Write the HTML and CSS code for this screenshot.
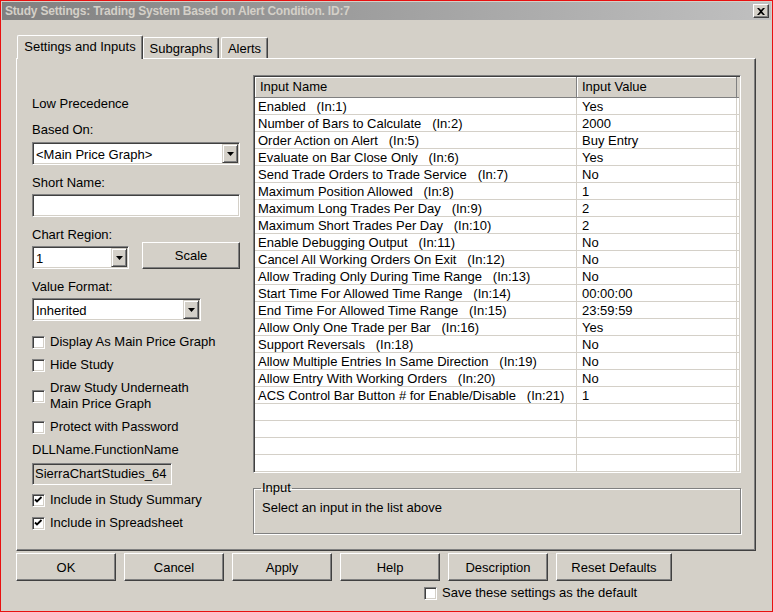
FILE: index.html
```html
<!DOCTYPE html>
<html lang="en">
<head>
  <meta charset="UTF-8" />
  <title>Study Settings</title>
  <link rel="stylesheet" href="styles.css">
</head>
<body>

<div class="window">
  <div class="titlebar">
    <span class="title">Study Settings: Trading System Based on Alert Condition. ID:7</span>
    <button class="close" title="Close">
      <svg width="8" height="7" viewBox="0 0 8 7"><path d="M0 0 L2 0 L4 2 L6 0 L8 0 L5 3.5 L8 7 L6 7 L4 5 L2 7 L0 7 L3 3.5 Z" fill="#000"/></svg>
    </button>
  </div>

  <div class="tabs">
    <div class="tab active tab-settings">Settings and Inputs</div>
    <div class="tab tab-subgraphs">Subgraphs</div>
    <div class="tab tab-alerts">Alerts</div>
  </div>

  <div class="panel">
    <div class="side">
      <div class="label first">Low Precedence</div>

      <div class="label">Based On:</div>
      <div class="combo combo-based">
        <span class="combo-text">&lt;Main Price Graph&gt;</span>
        <span class="combo-btn"><svg width="7" height="4" viewBox="0 0 7 4"><path d="M0 0 H7 L3.5 4 Z" fill="#000"/></svg></span>
      </div>

      <div class="label">Short Name:</div>
      <div class="field"></div>

      <div class="label">Chart Region:</div>
      <div class="region-row">
        <div class="combo combo-region">
          <span class="combo-text">1</span>
          <span class="combo-btn"><svg width="7" height="4" viewBox="0 0 7 4"><path d="M0 0 H7 L3.5 4 Z" fill="#000"/></svg></span>
        </div>
        <button class="btn btn-scale">Scale</button>
      </div>

      <div class="label">Value Format:</div>
      <div class="combo combo-format">
        <span class="combo-text">Inherited</span>
        <span class="combo-btn"><svg width="7" height="4" viewBox="0 0 7 4"><path d="M0 0 H7 L3.5 4 Z" fill="#000"/></svg></span>
      </div>

      <label class="check check-first"><span class="box"></span><span>Display As Main Price Graph</span></label>
      <label class="check"><span class="box"></span><span>Hide Study</span></label>
      <label class="check"><span class="box"></span><span>Draw Study Underneath<br>Main Price Graph</span></label>
      <label class="check"><span class="box"></span><span>Protect with Password</span></label>

      <div class="label dll">DLLName.FunctionName</div>
      <div class="field readonly">SierraChartStudies_64</div>

      <label class="check"><span class="box"><svg width="9" height="9" viewBox="0 0 9 9"><path d="M1 3.5 L3 5.5 L7.5 1" fill="none" stroke="#000" stroke-width="1.8"/></svg></span><span>Include in Study Summary</span></label>
      <label class="check"><span class="box"><svg width="9" height="9" viewBox="0 0 9 9"><path d="M1 3.5 L3 5.5 L7.5 1" fill="none" stroke="#000" stroke-width="1.8"/></svg></span><span>Include in Spreadsheet</span></label>
    </div>

    <div class="main">
      <div class="list">
        <div class="list-head">
          <div class="hcell">Input Name</div>
          <div class="hcell">Input Value</div>
        </div>
        <div id="rows"></div>
      </div>

      <fieldset class="group">
        <legend>Input</legend>
        <div class="group-text">Select an input in the list above</div>
      </fieldset>
    </div>
  </div>

  <div class="buttons">
    <button class="btn">OK</button>
    <button class="btn">Cancel</button>
    <button class="btn">Apply</button>
    <button class="btn">Help</button>
    <button class="btn">Description</button>
    <button class="btn btn-reset">Reset Defaults</button>
  </div>

  <label class="check save"><span class="box"></span><span>Save these settings as the default</span></label>
</div>

<script>
  const inputs = [
    ['Enabled', 1, 'Yes'],
    ['Number of Bars to Calculate', 2, '2000'],
    ['Order Action on Alert', 5, 'Buy Entry'],
    ['Evaluate on Bar Close Only', 6, 'Yes'],
    ['Send Trade Orders to Trade Service', 7, 'No'],
    ['Maximum Position Allowed', 8, '1'],
    ['Maximum Long Trades Per Day', 9, '2'],
    ['Maximum Short Trades Per Day', 10, '2'],
    ['Enable Debugging Output', 11, 'No'],
    ['Cancel All Working Orders On Exit', 12, 'No'],
    ['Allow Trading Only During Time Range', 13, 'No'],
    ['Start Time For Allowed Time Range', 14, '00:00:00'],
    ['End Time For Allowed Time Range', 15, '23:59:59'],
    ['Allow Only One Trade per Bar', 16, 'Yes'],
    ['Support Reversals', 18, 'No'],
    ['Allow Multiple Entries In Same Direction', 19, 'No'],
    ['Allow Entry With Working Orders', 20, 'No'],
    ['ACS Control Bar Button # for Enable/Disable', 21, '1']
  ];

  const rowsDiv = document.getElementById('rows');

  function addRow(name, value) {
    const row = document.createElement('div');
    row.className = 'row';
    const nameCell = document.createElement('div');
    nameCell.className = 'cell name';
    nameCell.textContent = name;
    const valueCell = document.createElement('div');
    valueCell.className = 'cell value';
    valueCell.textContent = value;
    row.appendChild(nameCell);
    row.appendChild(valueCell);
    rowsDiv.appendChild(row);
  }

  inputs.forEach(([name, id, value]) => addRow(`${name}   (In:${id})`, value));
  // empty rows fill the rest of the list
  for (let i = 0; i < 4; i++) addRow('', '');
</script>

</body>
</html>
```

FILE: styles.css
```css
* {
  box-sizing: border-box;
}
body {
  margin: 0;
  font-family: "Liberation Sans", Arial, sans-serif;
  font-size: 13px;
  color: #000;
}
.window {
  width: 773px;
  height: 612px;
  background: #d4d0c8;
  border: 1px solid #e81010;
}
.titlebar {
  display: flex;
  align-items: center;
  justify-content: space-between;
  height: 18px;
  margin: 1px 1px 0;
  padding: 0 2px 0 3px;
  background: linear-gradient(to right, #808080, #c0c0c0);
}
.title {
  color: #d4d0c8;
  font-weight: bold;
  font-size: 12px;
  letter-spacing: -0.2px;
  white-space: nowrap;
}
.close {
  display: flex;
  align-items: center;
  justify-content: center;
  width: 16px;
  height: 14px;
  padding: 0;
  background: #d4d0c8;
  border: 1px solid;
  border-color: #fff #404040 #404040 #fff;
  box-shadow: inset -1px -1px #808080;
}

/* tabs */
.tabs {
  display: flex;
  align-items: flex-end;
  height: 23px;
  margin-top: 15px;
  padding-left: 16px;
}
.tab {
  height: 21px;
  padding-top: 3px;
  line-height: 16px;
  text-align: center;
  white-space: nowrap;
  border-top: 1px solid #fff;
  border-left: 1px solid #fff;
  border-right: 1px solid #404040;
  border-radius: 2px 2px 0 0;
  box-shadow: inset -1px 0 #808080;
}
.tab.active {
  position: relative;
  z-index: 1;
  height: 24px;
  margin-bottom: -1px;
  background: #d4d0c8;
}
.tab-settings {
  width: 126px;
}
.tab-subgraphs {
  width: 76px;
}
.tab-alerts {
  width: 47px;
  margin-left: 2px;
}

/* main panel */
.panel {
  display: flex;
  width: 740px;
  height: 493px;
  margin-left: 15px;
  padding: 16px 0 0 15px;
  border-top: 1px solid #fff;
  border-left: 1px solid #fff;
  border-right: 1px solid #404040;
  border-bottom: 1px solid #404040;
  box-shadow: inset -1px -1px #808080;
}
.side {
  width: 208px;
}
.label {
  margin-top: 10px;
  line-height: 16px;
  white-space: nowrap;
}
.label.first {
  margin-top: 21px;
}
.label.dll {
  margin-top: 7px;
}

.combo, .field {
  height: 23px;
  background: #fff;
  border: 1px solid;
  border-color: #808080 #fff #fff #808080;
  box-shadow: inset 1px 1px #404040, inset -1px -1px #d4d0c8;
}
.combo {
  display: flex;
  margin-top: 4px;
  padding: 1px;
}
.combo-text {
  flex: 1;
  padding-left: 2px;
  line-height: 21px;
  white-space: nowrap;
}
.combo-btn {
  display: flex;
  align-items: center;
  justify-content: center;
  width: 16px;
  background: #d4d0c8;
  border: 1px solid;
  border-color: #d4d0c8 #404040 #404040 #d4d0c8;
  box-shadow: inset 1px 1px #fff, inset -1px -1px #808080;
}
.combo-based {
  width: 208px;
}
.combo-region {
  width: 97px;
  margin-top: 0;
}
.combo-format {
  width: 169px;
  margin-top: 3px;
}
.field {
  width: 208px;
  margin-top: 3px;
}
.field.readonly {
  width: 140px;
  height: 22px;
  margin-top: 5px;
  padding-left: 2px;
  background: #d4d0c8;
  line-height: 20px;
  white-space: nowrap;
  overflow: hidden;
}

.region-row {
  display: flex;
  align-items: flex-start;
  margin-top: 3px;
}

.btn {
  height: 28px;
  padding: 0;
  font: inherit;
  color: #000;
  background: #d4d0c8;
  border: 1px solid;
  border-color: #fff #404040 #404040 #fff;
  box-shadow: inset -1px -1px #808080;
}
.btn-scale {
  width: 98px;
  height: 27px;
  margin-left: 13px;
  margin-top: -4px;
}

.check {
  display: flex;
  align-items: center;
  margin-top: 7px;
  line-height: 16px;
  white-space: nowrap;
}
.check-first {
  margin-top: 13px;
}
.box {
  display: flex;
  align-items: center;
  justify-content: center;
  width: 13px;
  height: 13px;
  margin-right: 5px;
  flex-shrink: 0;
  background: #fff;
  border: 1px solid;
  border-color: #808080 #fff #fff #808080;
  box-shadow: inset 1px 1px #404040, inset -1px -1px #d4d0c8;
}

/* input list */
.main {
  width: 488px;
  margin-left: 13px;
}
.list {
  height: 398px;
  padding: 1px;
  background: #fff;
  overflow: hidden;
  border: 1px solid;
  border-color: #808080 #fff #fff #808080;
  box-shadow: inset 1px 1px #404040, inset -1px -1px #d4d0c8;
}
.list-head {
  display: flex;
  height: 21px;
  background: #d4d0c8;
  border-bottom: 1px solid #808080;
}
.hcell {
  height: 20px;
  line-height: 19px;
  padding-left: 5px;
  border-right: 1px solid #808080;
  box-shadow: inset 1px 1px #fff;
}
.hcell:first-child {
  width: 322px;
}
.hcell:last-child {
  width: 160px;
}
.row {
  display: grid;
  grid-template-columns: 322px 160px;
  height: 17px;
  border-bottom: 1px solid #d4d0c8;
}
.cell {
  line-height: 17px;
  white-space: pre;
  overflow: hidden;
}
.cell.name {
  padding-left: 3px;
  border-right: 1px solid #d4d0c8;
}
.cell.value {
  padding-left: 5px;
  border-right: 1px solid #d4d0c8;
}

.group {
  margin: 7px 0 0;
  padding: 4px 7px 17px;
  border: 1px solid #808080;
  box-shadow: inset 1px 1px #fff, 1px 1px #fff;
}
.group legend {
  padding: 0 1px;
  line-height: 16px;
}
.group-text {
  padding-left: 1px;
  line-height: 16px;
}

/* bottom buttons */
.buttons {
  display: flex;
  gap: 8px;
  margin-top: 2px;
  padding-left: 15px;
}
.buttons .btn {
  width: 100px;
}
.buttons .btn-reset {
  width: 116px;
}
.save {
  margin-top: 4px;
  padding-left: 423px;
}
```
